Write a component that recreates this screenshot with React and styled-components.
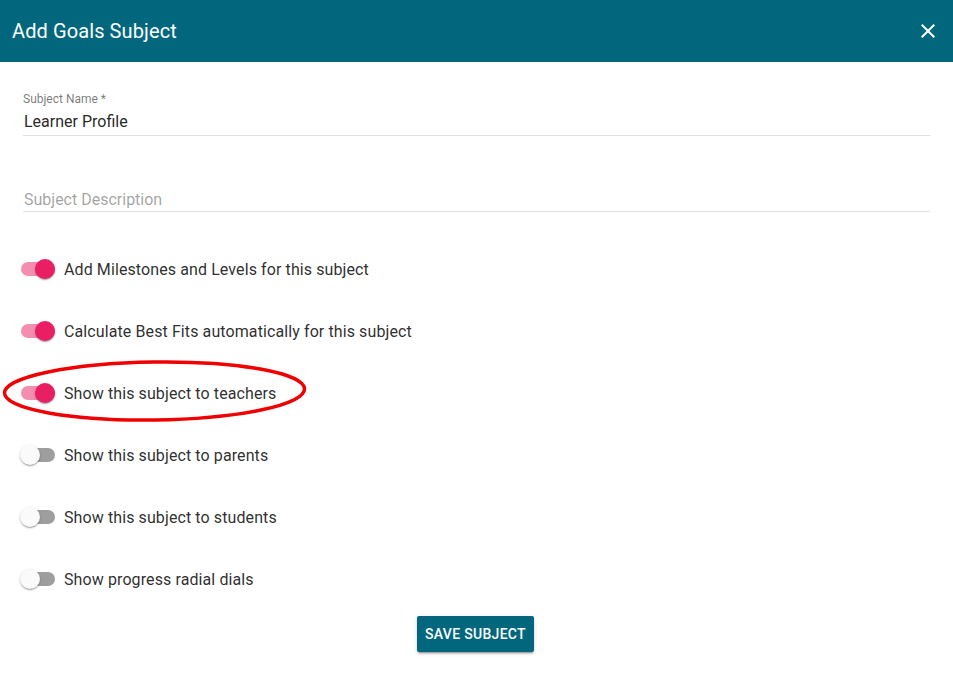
import React from "react";
import styled, { createGlobalStyle } from "styled-components";

const Global = createGlobalStyle`
  html, body { margin: 0; padding: 0; background: #fff; }
  body { font-family: Roboto, "Helvetica Neue", Arial, sans-serif; }
  * { box-sizing: border-box; }
`;

const Dialog = styled.div`
  position: relative;
  width: 953px;
  height: 677px;
  background: #fff;
  overflow: hidden;
`;

const Header = styled.header`
  height: 62px;
  background: #02677d;
  display: flex;
  align-items: center;
  justify-content: space-between;
  padding: 0 13px 0 12px;
`;

const Title = styled.h2`
  margin: 0;
  font-size: 20px;
  font-weight: 400;
  color: #fff;
  letter-spacing: 0.1px;
`;

const CloseButton = styled.button`
  border: 0;
  background: transparent;
  padding: 0;
  width: 24px;
  height: 24px;
  display: flex;
  color: #fff;
  cursor: pointer;
`;

const Body = styled.div`
  padding: 30px 23px 0 23px;
  display: flex;
  flex-direction: column;
`;

const Field = styled.div`
  display: flex;
  flex-direction: column;
  margin-top: ${(p) => p.$mt || 0}px;
`;

const Label = styled.label`
  font-size: 12px;
  line-height: 14px;
  color: rgba(0, 0, 0, 0.54);
  margin-bottom: 2px;
`;

const Input = styled.div`
  font-size: 16px;
  line-height: 19px;
  padding: ${(p) => (p.$placeholder ? "6px 1px 2px" : "4px 1px 4px")};
  color: ${(p) => (p.$placeholder ? "rgba(0,0,0,0.38)" : "rgba(0,0,0,0.87)")};
  border-bottom: 1px solid rgba(0, 0, 0, 0.12);
`;

const Toggles = styled.div`
  display: flex;
  flex-direction: column;
  margin-top: 26px;
`;

const Row = styled.div`
  height: 62px;
  display: flex;
  align-items: center;
  position: relative;
`;

const SwitchBox = styled.span`
  position: relative;
  width: 36px;
  height: 20px;
  margin-left: -3px;
  flex-shrink: 0;
`;

const Track = styled.span`
  position: absolute;
  left: 1px;
  top: 3px;
  width: 34px;
  height: 14px;
  border-radius: 7px;
  background: ${(p) => (p.$on ? "#e91e63" : "#000")};
  opacity: ${(p) => (p.$on ? 0.5 : 0.38)};
`;

const Thumb = styled.span`
  position: absolute;
  top: 0;
  left: ${(p) => (p.$on ? "15px" : "0")};
  width: 20px;
  height: 20px;
  border-radius: 50%;
  background: ${(p) => (p.$on ? "#e91e63" : "#fafafa")};
  box-shadow: 0 1px 3px rgba(0, 0, 0, 0.2), 0 1px 1px rgba(0, 0, 0, 0.14),
    0 2px 1px -1px rgba(0, 0, 0, 0.12);
`;

const RowText = styled.span`
  margin-left: 8px;
  font-size: 16px;
  color: rgba(0, 0, 0, 0.84);
  letter-spacing: 0.1px;
`;

const Footer = styled.div`
  display: flex;
  justify-content: center;
  margin-top: 6px;
`;

const SaveButton = styled.button`
  height: 36px;
  padding: 0 8px;
  margin-left: -2px;
  border: 0;
  border-radius: 2px;
  background: #02677d;
  color: #fff;
  font-family: Roboto, Arial, sans-serif;
  font-size: 14px;
  font-weight: 500;
  letter-spacing: 0.3px;
  text-transform: uppercase;
  box-shadow: 0 3px 1px -2px rgba(0, 0, 0, 0.2), 0 2px 2px 0 rgba(0, 0, 0, 0.14),
    0 1px 5px 0 rgba(0, 0, 0, 0.12);
`;

const Annotation = styled.svg`
  position: absolute;
  left: 0;
  top: 350px;
  width: 330px;
  height: 85px;
  pointer-events: none;
`;

function Switch({ on }) {
  return (
    <SwitchBox>
      <Track $on={on} />
      <Thumb $on={on} />
    </SwitchBox>
  );
}

const toggles = [
  ["Add Milestones and Levels for this subject", true],
  ["Calculate Best Fits automatically for this subject", true],
  ["Show this subject to teachers", true],
  ["Show this subject to parents", false],
  ["Show this subject to students", false],
  ["Show progress radial dials", false],
];

export default function App() {
  return (
    <>
      <Global />
      <Dialog>
        <Header>
          <Title>Add Goals Subject</Title>
          <CloseButton aria-label="close">
            <svg width="24" height="24" viewBox="0 0 24 24" fill="currentColor">
              <path d="M19 6.41L17.59 5 12 10.59 6.41 5 5 6.41 10.59 12 5 17.59 6.41 19 12 13.41 17.59 19 19 17.59 13.41 12z" />
            </svg>
          </CloseButton>
        </Header>
        <Body>
          <Field>
            <Label>Subject Name *</Label>
            <Input>Learner Profile</Input>
          </Field>
          <Field $mt={48}>
            <Input $placeholder>Subject Description</Input>
          </Field>
          <Toggles>
            {toggles.map(([t, on]) => (
              <Row key={t}>
                <Switch on={on} />
                <RowText>{t}</RowText>
              </Row>
            ))}
          </Toggles>
          <Footer>
            <SaveButton>Save Subject</SaveButton>
          </Footer>
        </Body>
        <Annotation viewBox="0 350 330 85">
          <ellipse
            cx="154.5"
            cy="391"
            rx="150"
            ry="29"
            fill="none"
            stroke="#f00000"
            strokeWidth="3.5"
            transform="rotate(-0.8 154.5 391)"
          />
        </Annotation>
      </Dialog>
    </>
  );
}
